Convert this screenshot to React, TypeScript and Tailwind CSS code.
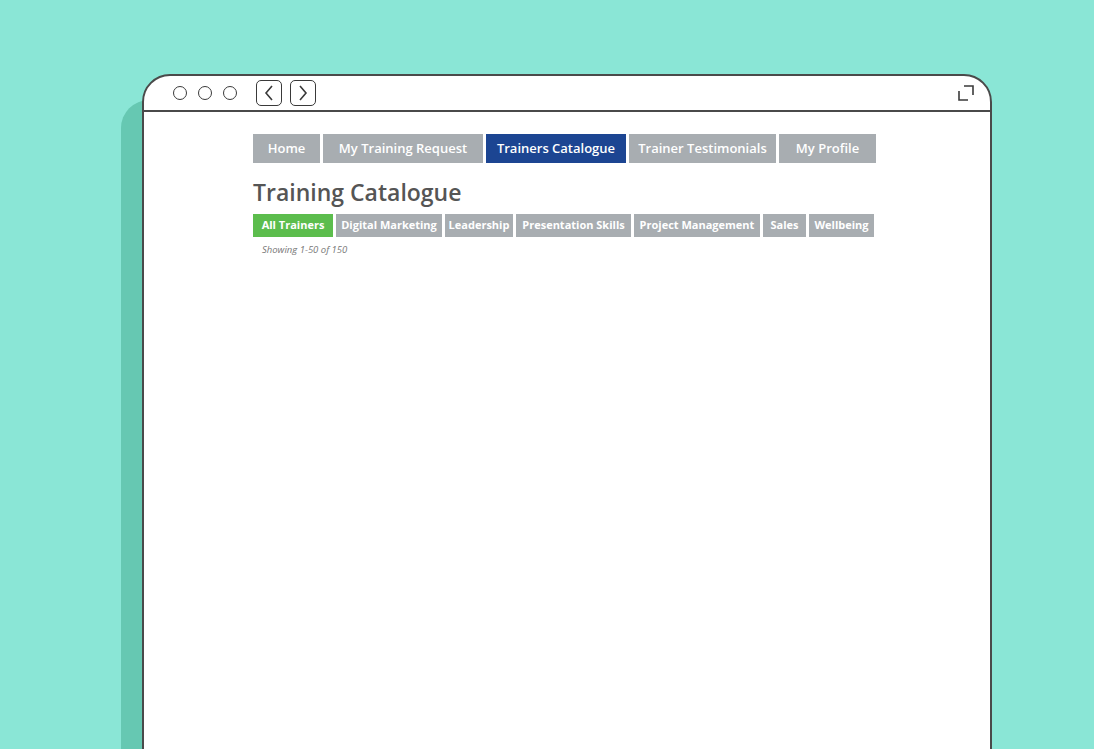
import { useState } from 'react'

const NAV = [
  { label: 'Home', w: 'w-[67px]' },
  { label: 'My Training Request', w: 'w-[160px]' },
  { label: 'Trainers Catalogue', w: 'w-[140px]' },
  { label: 'Trainer Testimonials', w: 'w-[147px]' },
  { label: 'My Profile', w: 'w-[97px]' },
]
const FILTERS = [
  { label: 'All Trainers', w: 'w-[80px]' },
  { label: 'Digital Marketing', w: 'w-[106px]' },
  { label: 'Leadership', w: 'w-[68px]' },
  { label: 'Presentation Skills', w: 'w-[115px]' },
  { label: 'Project Management', w: 'w-[126px]' },
  { label: 'Sales', w: 'w-[43px]' },
  { label: 'Wellbeing', w: 'w-[65px]' },
]

// ── Browser chrome: dots, back/forward, expand icon ──
function Chrome() {
  return (
    <div className="h-[36px] border-b-2 border-[#4a4a4a] flex items-center pl-[29px] pr-[16px]">
      <div className="flex gap-[11px]">
        {[0, 1, 2].map(i => <span key={i} className="w-[14px] h-[14px] rounded-full border-[1.5px] border-[#3a3a3a]" />)}
      </div>
      <div className="flex gap-[8px] ml-[19px]">
        <button className="w-[26px] h-[26px] rounded-[5px] border-[1.5px] border-[#3a3a3a] flex items-center justify-center">
          <svg width="10" height="16" viewBox="0 0 10 16" fill="none" stroke="#3a3a3a" strokeWidth="1.6"><path d="M8 1 L2 8 L8 15" /></svg>
        </button>
        <button className="w-[26px] h-[26px] rounded-[5px] border-[1.5px] border-[#3a3a3a] flex items-center justify-center">
          <svg width="10" height="16" viewBox="0 0 10 16" fill="none" stroke="#3a3a3a" strokeWidth="1.6"><path d="M2 1 L8 8 L2 15" /></svg>
        </button>
      </div>
      <svg className="ml-auto" width="16" height="16" viewBox="0 0 16 16" fill="none" stroke="#3a3a3a" strokeWidth="1.6">
        <path d="M6 1 H15 V10" /><path d="M1 6 V15 H10" />
      </svg>
    </div>
  )
}

export default function App() {
  const [tab, setTab] = useState('Trainers Catalogue')
  const [filter, setFilter] = useState('All Trainers')

  return (
    <div className="w-[1094px] h-[749px] overflow-hidden bg-[#8ae6d6] relative" style={{ fontFamily: '"Open Sans", sans-serif' }}>
      {/* shadow panel behind the window */}
      <div className="absolute left-[121px] top-[100px] w-[200px] h-[700px] rounded-tl-[28px] bg-[#66c8b2]" />
      <div className="absolute left-[142px] top-[74px] w-[850px] h-[700px] bg-white border-2 border-[#4a4a4a] rounded-t-[28px] overflow-hidden">
        <Chrome />
        <div className="pl-[109px] pt-[22px]">
          <nav className="flex gap-[3px]">
            {NAV.map(n => (
              <button key={n.label} onClick={() => setTab(n.label)}
                className={`${n.w} h-[29px] text-[13px] font-semibold text-white whitespace-nowrap ${tab === n.label ? 'bg-[#1c4592]' : 'bg-[#a8adb1]'}`}>
                {n.label}
              </button>
            ))}
          </nav>
          <h1 className="text-[23px] font-semibold text-[#555] mt-[13px] leading-[32px]">Training Catalogue</h1>
          <div className="flex gap-[3px] mt-[6px]">
            {FILTERS.map(f => (
              <button key={f.label} onClick={() => setFilter(f.label)}
                className={`${f.w} h-[23px] text-[11px] font-bold text-white whitespace-nowrap ${filter === f.label ? 'bg-[#5cbd4d]' : 'bg-[#a8adb1]'}`}>
                {f.label}
              </button>
            ))}
          </div>
          <p className="text-[9.5px] italic text-[#777] mt-[6px] ml-[9px]">Showing 1-50 of 150</p>
        </div>
      </div>
    </div>
  )
}
